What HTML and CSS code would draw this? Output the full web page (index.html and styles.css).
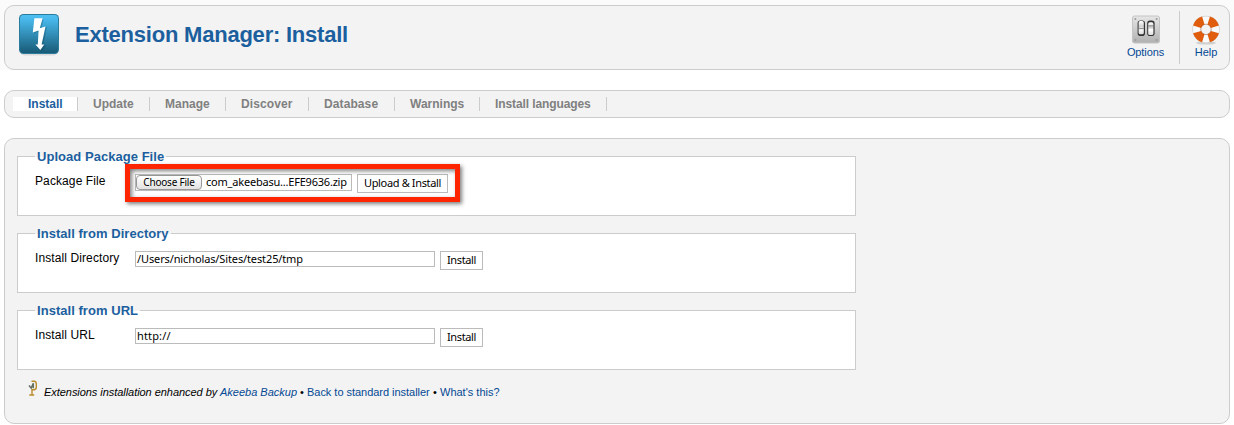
FILE: index.html
```html
<!DOCTYPE html>
<html lang="en">
<head>
<meta charset="utf-8">
<title>Extension Manager: Install</title>
<link rel="stylesheet" href="styles.css">
</head>
<body>
<div class="top">
  <header class="panel header">
    <svg class="logo" width="44" height="46" viewBox="0 0 44 46">
      <defs>
        <linearGradient id="blue" x1="0" y1="0" x2="0" y2="1"><stop offset="0" stop-color="#4fc0f2"/><stop offset=".15" stop-color="#46b4e6"/><stop offset="1" stop-color="#185a76"/></linearGradient>
      </defs>
      <rect x="2.5" y="5" width="39" height="38.5" rx="5" fill="#000" opacity=".1"/>
      <rect x="2" y="2" width="40" height="40" rx="4.5" fill="#2b7c9c"/>
      <rect x="3" y="3" width="38" height="38" rx="3.5" fill="url(#blue)"/>
      <path d="M19 7.5L17.2 21.4L22.6 19L22.4 33L20 33L24.8 39.6L29 33.4L26.2 33.2L30 14.6L24.2 17L26.6 7.5Z" fill="#083e55" opacity=".3"/>
      <path d="M17.4 6.2L15.8 20.6L21.6 18.4L20.8 32.6L18.4 32.4L23.4 38L27.2 32.6L24.6 32.4L28.5 14.4L22.8 16.2L25.6 6.2Z" fill="#fff"/>
    </svg>
    <h1 class="title">Extension Manager: Install</h1>
    <div class="toolbar">
      <a class="tool options">
        <svg width="32" height="32" viewBox="0 0 32 32">
          <defs><linearGradient id="plate" x1="0" y1="0" x2="0" y2="1"><stop offset="0" stop-color="#e6e6e6"/><stop offset="1" stop-color="#b0b0b0"/></linearGradient>
          <linearGradient id="knob" x1="0" y1="0" x2="0" y2="1"><stop offset="0" stop-color="#fff"/><stop offset=".45" stop-color="#ccc"/><stop offset=".55" stop-color="#fff"/><stop offset="1" stop-color="#ddd"/></linearGradient></defs>
          <rect x="2.5" y="3" width="27" height="27" rx="2" fill="url(#plate)" stroke="#c4c4c4"/>
          <g fill="#999"><circle cx="5.4" cy="6" r="1"/><circle cx="26.6" cy="6" r="1"/><circle cx="5.4" cy="27" r="1"/><circle cx="26.6" cy="27" r="1"/></g>
          <rect x="7.6" y="7.5" width="7.4" height="15.6" rx="2.8" fill="#333"/><rect x="17.2" y="7.5" width="7.4" height="15.6" rx="2.8" fill="#333"/>
          <rect x="8.6" y="8.1" width="5.2" height="13.2" rx="1.6" fill="url(#knob)"/><rect x="18.2" y="9.3" width="5.2" height="12.8" rx="1.6" fill="url(#knob)"/>
          <path d="M8.6 15.6h5.2M18.2 12.9h5.2" stroke="#666" stroke-width=".8"/>
        </svg>
        <span>Options</span>
      </a>
      <a class="tool help">
        <svg width="32" height="32" viewBox="0 0 32 32">
          <ellipse cx="16" cy="30" rx="10" ry="1.6" fill="#000" opacity=".14"/>
          <circle cx="16" cy="16.4" r="9.3" fill="none" stroke="#d0d0d0" stroke-width="8.8"/>
          <circle cx="16" cy="16.4" r="9.3" fill="none" stroke="#fafafa" stroke-width="7.4"/>
          <circle cx="16" cy="16.4" r="9.3" fill="none" stroke="#df5d0d" stroke-width="8.4" pathLength="80" stroke-dasharray="12.4 7.6" stroke-dashoffset="-3.8"/>
          <circle cx="16" cy="16.4" r="5.2" fill="none" stroke="#a64a12" stroke-width=".6" opacity=".6"/>
        </svg>
        <span>Help</span>
      </a>
    </div>
  </header>
</div>

<nav class="panel nav">
  <a class="tab t-install active">Install</a>
  <a class="tab t-update">Update</a>
  <a class="tab t-manage">Manage</a>
  <a class="tab t-discover">Discover</a>
  <a class="tab t-database">Database</a>
  <a class="tab t-warnings">Warnings</a>
  <a class="tab t-languages">Install languages</a>
</nav>

<main class="panel main">
  <section class="group">
    <h2 class="legend"><span>Upload Package File</span></h2>
    <div class="row">
      <label class="label">Package File</label>
      <div class="file"><span class="choose">Choose File</span><span class="filename">com_akeebasu...EFE9636.zip</span></div>
      <button class="btn upload">Upload &amp; Install</button>
    </div>
    <div class="highlight"></div>
  </section>
  <section class="group">
    <h2 class="legend"><span>Install from Directory</span></h2>
    <div class="row">
      <label class="label">Install Directory</label>
      <div class="field">/Users/nicholas/Sites/test25/tmp</div>
      <button class="btn">Install</button>
    </div>
  </section>
  <section class="group">
    <h2 class="legend"><span>Install from URL</span></h2>
    <div class="row">
      <label class="label">Install URL</label>
      <div class="field url">http://</div>
      <button class="btn">Install</button>
    </div>
  </section>
  <footer class="foot">
    <svg class="akeeba" width="16" height="16" viewBox="0 0 16 16">
      <path d="M6.5 1.2H9.2Q11.3 1.4 11.3 4V7.6Q11 9.8 8.4 9.8H7V14.5M4.3 15H9.2" fill="none" stroke="#b98c28" stroke-width="1.4"/>
      <path d="M4 5.5L6.2 8L8.3 3.2V8.2" fill="none" stroke="#66705f" stroke-width="1.5"/>
    </svg>
    <span class="it credit">Extensions installation enhanced by</span>
    <a class="it akb">Akeeba Backup</a><span class="dot">•</span><a class="back">Back to standard installer</a><span class="dot">•</span><a class="what">What's this?</a>
  </footer>
</main>
</body>
</html>
```
FILE: styles.css
```css
* { box-sizing: border-box; }
body {
  margin: 0;
  background: #fff;
  color: #000;
  font: 12px/16px "Liberation Sans", Arial, sans-serif;
  overflow: hidden;
}
.top { background: #fbfbfb; padding: 5px 4px 0; height: 70px; }
.panel { width: 1226px; border: 1px solid #ccc; border-radius: 10px; background: #f3f3f3; }

.header { height: 65px; display: flex; align-items: flex-start; }
.logo { margin: 6px 0 0 12px; flex: none; }
.title { margin: 16px 0 0 14px; font-size: 22px; line-height: 26px; font-weight: bold; letter-spacing: -0.22px; color: #1c5f9e; white-space: nowrap; }
.toolbar { display: flex; margin: 5px 0 0 auto; color: #054993; font-size: 11px; line-height: 13px; }
.tool { height: 53px; padding-top: 2px; display: flex; flex-direction: column; align-items: center; }
.tool span { margin-top: 1px; }
.options { width: 69px; padding-left: 1px; border-right: 1px solid #ccc; letter-spacing: -0.1px; }
.help { width: 49px; padding-left: 3px; }

.nav { height: 28px; margin: 20px 4px 0; padding: 6px 0 0 8px; display: flex; }
.tab { height: 14px; padding-left: 15px; border-right: 1px solid #ccc; color: #808080; font-weight: bold; line-height: 14px; white-space: nowrap; }
.active { background: #fff; color: #1c5f9e; }
.t-install { width: 65px; }
.t-update { width: 72px; }
.t-manage { width: 76px; }
.t-discover { width: 83px; letter-spacing: 0.1px; }
.t-database { width: 86px; letter-spacing: 0.1px; }
.t-warnings { width: 85px; }
.t-languages { width: 127px; letter-spacing: -0.1px; }

.main { height: 286px; margin: 20px 4px 0; padding: 17px 12px 0; }
.group { position: relative; width: 839px; height: 60px; margin-bottom: 17px; border: 1px solid #ccc; background: #fff; }
.legend { margin: -8px 0 0 17px; height: 16px; font-size: 13px; line-height: 16px; letter-spacing: 0.04px; display: flex; color: #1c5f9e; }
.legend span { padding: 0 2px; background: linear-gradient(#f3f3f3 8px, #fff 8px); white-space: nowrap; }
.row { display: flex; align-items: flex-start; padding-left: 17px; margin-top: 8px; }
.label { width: 100px; line-height: 16px; letter-spacing: 0.1px; white-space: nowrap; }
.file, .field, .btn { font-family: "Noto Sans", "Open Sans", sans-serif; font-size: 11px; white-space: nowrap; }
.field { width: 300px; height: 16px; margin-top: 1px; padding-left: 1px; border: 1px solid #bbb; line-height: 14px; letter-spacing: -0.12px; }
.url { letter-spacing: 0.15px; }
.file { width: 217px; height: 17px; margin-top: 1px; border: 1px solid #bbb; display: flex; line-height: 14px; letter-spacing: -0.21px; }
.choose { width: 66px; height: 15px; border: 1px solid #999; border-radius: 4px; background: linear-gradient(#fff, #e2e2e2); font-size: 10px; line-height: 13px; text-align: center; }
.filename { margin-left: 4px; }
.btn { width: 43px; height: 19px; margin: 1px 0 0 5px; padding: 0 0 2px; border: 1px solid #bbb; background: #fff; color: #000; line-height: 15px; letter-spacing: -0.35px; text-align: center; }
.upload { width: 91px; }
/* Callout frame drawn over the upload controls */
.highlight { position: absolute; left: 107px; top: 7px; width: 335px; height: 38px; border: 5px solid #fe2500; box-shadow: 2px 2px 4px rgba(0,0,0,.5), inset 2px 2px 4px rgba(0,0,0,.5); }

.foot { display: flex; margin: -7px 0 0 8px; font-size: 11px; line-height: 16px; white-space: nowrap; }
.foot span, .foot a { margin-top: 4px; }
.foot a { color: #054993; }
.it { font-style: italic; }
.credit { margin-left: 3px; width: 176px; letter-spacing: -0.05px; }
.akb { width: 77px; }
.dot { width: 10px; text-align: center; }
.back { width: 123px; letter-spacing: -0.03px; }
```
